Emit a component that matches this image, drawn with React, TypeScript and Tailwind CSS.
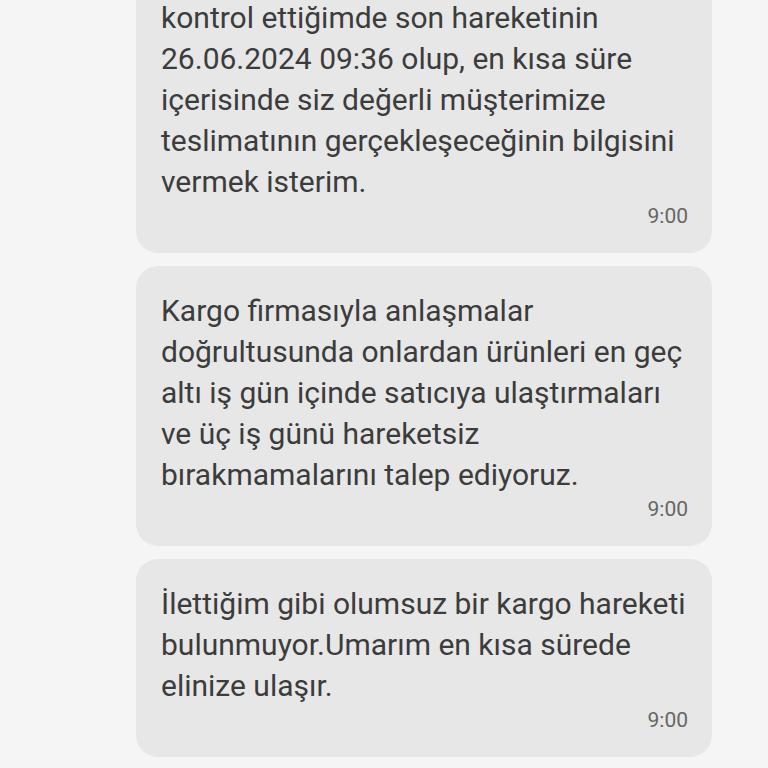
import React from "react";

const Bubble = ({ lines, first }: { lines: string[]; first?: boolean }) => (
  <div
    className={`w-[576px] ml-[136px] rounded-[22px] bg-[#e7e7e7] pt-[24px] pb-[23px] pl-[25px] pr-[20px] ${first ? "mt-[-27px]" : ""}`}
  >
    <div className="text-[30px] leading-[41px] text-[#3c3c3c] whitespace-nowrap">
      {lines.map((l, i) => (
        <div key={i}>{l}</div>
      ))}
    </div>
    <div className="text-right text-[21px] leading-[28px] text-[#666666] pr-[4px]">9:00</div>
  </div>
);

export default function App() {
  return (
    <div
      className="w-[768px] h-[768px] overflow-hidden bg-[#f5f5f5] flex flex-col gap-[13px]"
      style={{ fontFamily: "Roboto, 'Noto Sans', sans-serif" }}
    >
      <Bubble
        first
        lines={[
          "kontrol ettiğimde son hareketinin",
          "26.06.2024 09:36 olup, en kısa süre",
          "içerisinde siz değerli müşterimize",
          "teslimatının gerçekleşeceğinin bilgisini",
          "vermek isterim.",
        ]}
      />
      <Bubble
        lines={[
          "Kargo firmasıyla anlaşmalar",
          "doğrultusunda onlardan ürünleri en geç",
          "altı iş gün içinde satıcıya ulaştırmaları",
          "ve üç iş günü hareketsiz",
          "bırakmamalarını talep ediyoruz.",
        ]}
      />
      <Bubble
        lines={[
          "İlettiğim gibi olumsuz bir kargo hareketi",
          "bulunmuyor.Umarım en kısa sürede",
          "elinize ulaşır.",
        ]}
      />
      <div className="w-[576px] ml-[136px] h-[120px] shrink-0 rounded-[22px] bg-[#e7e7e7]" />
    </div>
  );
}
